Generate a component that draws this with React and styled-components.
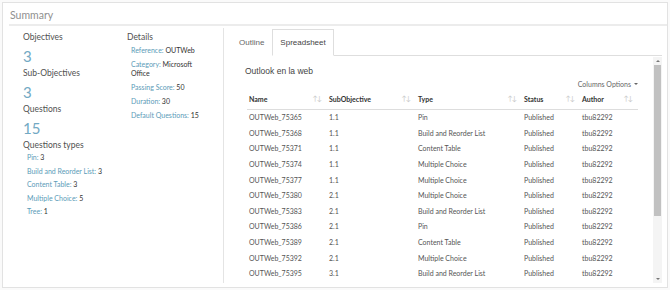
import React from 'react';
import styled, { createGlobalStyle } from 'styled-components';

const GlobalStyle = createGlobalStyle`
  body {
    margin: 0;
    background: #fafafa;
    font-family: 'Lato', 'Liberation Sans', sans-serif;
  }
`;

const Card = styled.section`
  margin: 2px;
  width: 664px;
  height: 284px;
  border: 1px solid #e2e2e2;
  background: #fff;
  display: flex;
  flex-direction: column;
  overflow: hidden;
`;

const CardTitle = styled.h2`
  margin: 0 0 0 6px;
  padding: 6px 0 2px 1px;
  font-family: 'Lato', sans-serif;
  font-size: 10.5px;
  line-height: 13px;
  font-weight: 400;
  color: #8f8f8f;
  border-bottom: 2px solid #ececec;
`;

const Body = styled.div`
  flex: 1;
  display: flex;
  min-height: 0;
  padding-bottom: 4px;
`;

const Sidebar = styled.aside`
  width: 221px;
  margin-top: 2px;
  border-right: 1px solid #e4e4e4;
  display: flex;
  padding: 3px 0 0 20px;
  box-sizing: border-box;
`;

const StatsColumn = styled.div`
  width: 104px;
`;

const DetailsColumn = styled.div`
  flex: 1;
`;

const StatLabel = styled.div`
  font-size: 8.5px;
  color: #505050;
  line-height: 12px;
`;

const StatValue = styled.div`
  font-size: 15px;
  font-weight: 400;
  color: #72a9c3;
  line-height: 18px;
  margin: 4px 0 2px;
`;

const InfoList = styled.ul`
  list-style: none;
  margin: ${p => p.$top}px 0 0 4px;
  padding: 0;
`;

const InfoItem = styled.li`
  font-size: 7px;
  line-height: ${p => p.$line}px;
  color: #333;
  margin-bottom: ${p => p.$gap}px;
  white-space: nowrap;

  & span {
    color: #5b9bb8;
  }
`;

const InfoMore = styled.div`
  display: block;
`;

const Main = styled.div`
  flex: 1;
  display: flex;
  flex-direction: column;
  padding: 3px 5px 0 7px;
  min-width: 0;
`;

const Tabs = styled.div`
  display: flex;
  border-bottom: 1px solid #dedede;
  height: 26px;
`;

const Tab = styled.div`
  font-family: 'Liberation Sans', sans-serif;
  font-size: 8px;
  color: ${p => (p.$active ? '#444' : '#666')};
  padding: 0 7px;
  display: flex;
  align-items: center;
  margin-bottom: -1px;
  background: #fff;
  border: 1px solid ${p => (p.$active ? '#dedede' : 'transparent')};
  border-bottom-color: ${p => (p.$active ? '#fff' : 'transparent')};
`;

const Pane = styled.div`
  flex: 1;
  display: flex;
  min-height: 0;
`;

const Scroller = styled.div`
  flex: 1;
  overflow: hidden;
  padding: 0 14px;
`;

const PaneTitle = styled.h3`
  margin: 10px 0 0;
  font-family: 'Liberation Sans', sans-serif;
  font-size: 8.5px;
  line-height: 10px;
  font-weight: 400;
  color: #444;
`;

const Toolbar = styled.div`
  display: flex;
  justify-content: flex-end;
  margin-top: 3px;
  padding-right: 1px;
`;

const ColumnsButton = styled.button`
  border: 0;
  background: none;
  padding: 0;
  font-family: 'Lato', sans-serif;
  font-size: 7px;
  line-height: 10px;
  color: #666;
  display: flex;
  align-items: center;
  gap: 3px;

  &::after {
    content: '';
    border-left: 2px solid transparent;
    border-right: 2px solid transparent;
    border-top: 2px solid #666;
  }
`;

const Table = styled.table`
  width: 391px;
  margin: 3px 0 0 2px;
  border-collapse: collapse;
  table-layout: fixed;
  font-size: 7px;
`;

const Th = styled.th`
  box-sizing: border-box;
  width: ${p => p.$w}px;
  text-align: left;
  font-weight: 700;
  color: #333;
  height: 17px;
  padding: 0 2px 2px;
  border-bottom: 1px solid #ddd;
  position: relative;
`;

const SortIcon = styled.span`
  position: absolute;
  right: 6px;
  top: 2px;
  color: #c8c8c8;
  font-size: 7px;
  font-weight: 400;
  letter-spacing: -1px;
`;

const Td = styled.td`
  padding: 0 2px;
  height: 15.6px;
  color: #555;
  white-space: nowrap;
  overflow: hidden;
`;

const Scrollbar = styled.div`
  width: 9px;
  display: flex;
  flex-direction: column;
  align-items: center;
  background: #f4f4f4;
  margin-top: 1px;
`;

const Arrow = styled.div`
  height: 8px;
  display: flex;
  align-items: center;
  justify-content: center;

  &::before {
    content: '';
    border-left: 2px solid transparent;
    border-right: 2px solid transparent;
    ${p => (p.$up ? 'border-bottom' : 'border-top')}: 2px solid #777;
  }
`;

const Thumb = styled.div`
  width: 7px;
  height: 151px;
  background: #c1c1c1;
`;

const Track = styled.div`
  flex: 1;
`;

const columns = [
  { key: 'name', label: 'Name', w: 80 },
  { key: 'sub', label: 'SubObjective', w: 89 },
  { key: 'type', label: 'Type', w: 106 },
  { key: 'status', label: 'Status', w: 58 },
  { key: 'author', label: 'Author', w: 58 },
];

const rows = [
  ['OUTWeb_75365', '1.1', 'Pin'],
  ['OUTWeb_75368', '1.1', 'Build and Reorder List'],
  ['OUTWeb_75371', '1.1', 'Content Table'],
  ['OUTWeb_75374', '1.1', 'Multiple Choice'],
  ['OUTWeb_75377', '1.1', 'Multiple Choice'],
  ['OUTWeb_75380', '2.1', 'Multiple Choice'],
  ['OUTWeb_75383', '2.1', 'Build and Reorder List'],
  ['OUTWeb_75386', '2.1', 'Pin'],
  ['OUTWeb_75389', '2.1', 'Content Table'],
  ['OUTWeb_75392', '2.1', 'Multiple Choice'],
  ['OUTWeb_75395', '3.1', 'Build and Reorder List'],
];

const questionTypes = [
  ['Pin', 3],
  ['Build and Reorder List', 3],
  ['Content Table', 3],
  ['Multiple Choice', 5],
  ['Tree', 1],
];

// second entry of a value wraps onto its own line, as in the narrow column
const details = [
  ['Reference', 'OUTWeb'],
  ['Category', 'Microsoft', 'Office'],
  ['Passing Score', '50'],
  ['Duration', '30'],
  ['Default Questions', '15'],
];

export default function App() {
  return (
    <>
      <GlobalStyle />
      <Card>
        <CardTitle>Summary</CardTitle>
        <Body>
          <Sidebar>
            <StatsColumn>
              <StatLabel>Objectives</StatLabel>
              <StatValue>3</StatValue>
              <StatLabel>Sub-Objectives</StatLabel>
              <StatValue>3</StatValue>
              <StatLabel>Questions</StatLabel>
              <StatValue>15</StatValue>
              <StatLabel>Questions types</StatLabel>
              <InfoList $top={2}>
                {questionTypes.map(([label, n]) => (
                  <InfoItem key={label} $line={9.5} $gap={4}>
                    <span>{label}:</span> {n}
                  </InfoItem>
                ))}
              </InfoList>
            </StatsColumn>
            <DetailsColumn>
              <StatLabel>Details</StatLabel>
              <InfoList $top={2.5}>
                {details.map(([label, value, more]) => (
                  <InfoItem key={label} $line={9.5} $gap={4.5}>
                    <span>{label}:</span> {value}
                    {more && <InfoMore>{more}</InfoMore>}
                  </InfoItem>
                ))}
              </InfoList>
            </DetailsColumn>
          </Sidebar>
          <Main>
            <Tabs>
              <Tab>Outline</Tab>
              <Tab $active>Spreadsheet</Tab>
            </Tabs>
            <Pane>
              <Scroller>
                <PaneTitle>Outlook en la web</PaneTitle>
                <Toolbar>
                  <ColumnsButton>Columns Options</ColumnsButton>
                </Toolbar>
                <Table>
                  <thead>
                    <tr>
                      {columns.map(c => (
                        <Th key={c.key} $w={c.w}>
                          {c.label}
                          <SortIcon>↑↓</SortIcon>
                        </Th>
                      ))}
                    </tr>
                  </thead>
                  <tbody>
                    {rows.map(([name, sub, type]) => (
                      <tr key={name}>
                        <Td>{name}</Td>
                        <Td>{sub}</Td>
                        <Td>{type}</Td>
                        <Td>Published</Td>
                        <Td>tbu82292</Td>
                      </tr>
                    ))}
                  </tbody>
                </Table>
              </Scroller>
              <Scrollbar>
                <Arrow $up />
                <Thumb />
                <Track />
                <Arrow />
              </Scrollbar>
            </Pane>
          </Main>
        </Body>
      </Card>
    </>
  );
}
